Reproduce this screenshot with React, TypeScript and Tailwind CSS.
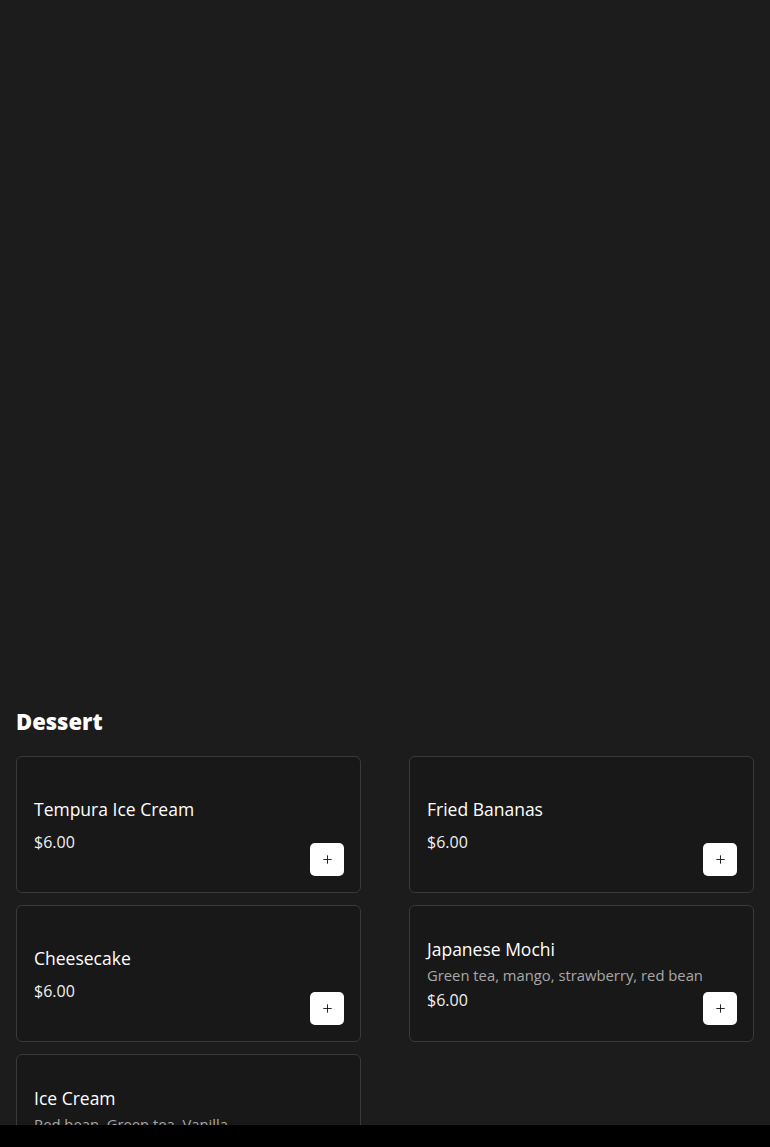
import React from 'react';
import { Plus } from 'lucide-react';

interface Item {
  id: string;
  name: string;
  desc?: string;
  price: number;
}

const desserts: Item[] = [
  { id: 'tempura', name: 'Tempura Ice Cream', price: 6 },
  { id: 'bananas', name: 'Fried Bananas', price: 6 },
  { id: 'cheesecake', name: 'Cheesecake', price: 6 },
  { id: 'mochi', name: 'Japanese Mochi', desc: 'Green tea, mango, strawberry, red bean', price: 6 },
  { id: 'icecream', name: 'Ice Cream', desc: 'Red bean, Green tea, Vanilla', price: 6 },
];

function MenuCard({ item }: { item: Item }) {
  return (
    <div className="flex justify-between min-h-[137px] pl-[17px] pr-4 py-4 bg-[#181818] border border-[#3a3a3a] rounded-md">
      <div className="self-center">
        <h3 className={`text-[17.5px] leading-[26px] font-medium text-white ${item.desc ? '' : 'mb-2'}`}>
          {item.name}
        </h3>
        {item.desc && (
          <p className="text-[14.8px] leading-[26px] text-[#a8a8a8]">{item.desc}</p>
        )}
        <p className="text-[16px] leading-[24px] text-[#f0f0f0]">${item.price.toFixed(2)}</p>
      </div>
      <button className="self-end w-[34px] h-[33px] flex items-center justify-center bg-white rounded-[5px] text-[#1a1a1a]">
        <Plus size={13} strokeWidth={1.75} />
      </button>
    </div>
  );
}

export default function App() {
  return (
    <div className="min-h-screen bg-[#1c1c1c] px-4 pb-16" style={{ fontFamily: '"Open Sans", "Liberation Sans", sans-serif' }}>
      <div className="h-[706px]" />
      <h2 className="text-[22px] leading-[30px] font-extrabold text-white mb-5">Dessert</h2>
      <div className="grid grid-cols-2 gap-x-12 gap-y-3">
        {desserts.map((item) => (
          <MenuCard key={item.id} item={item} />
        ))}
      </div>
      <div className="fixed bottom-0 left-0 right-0 h-[22px] bg-black" />
    </div>
  );
}
